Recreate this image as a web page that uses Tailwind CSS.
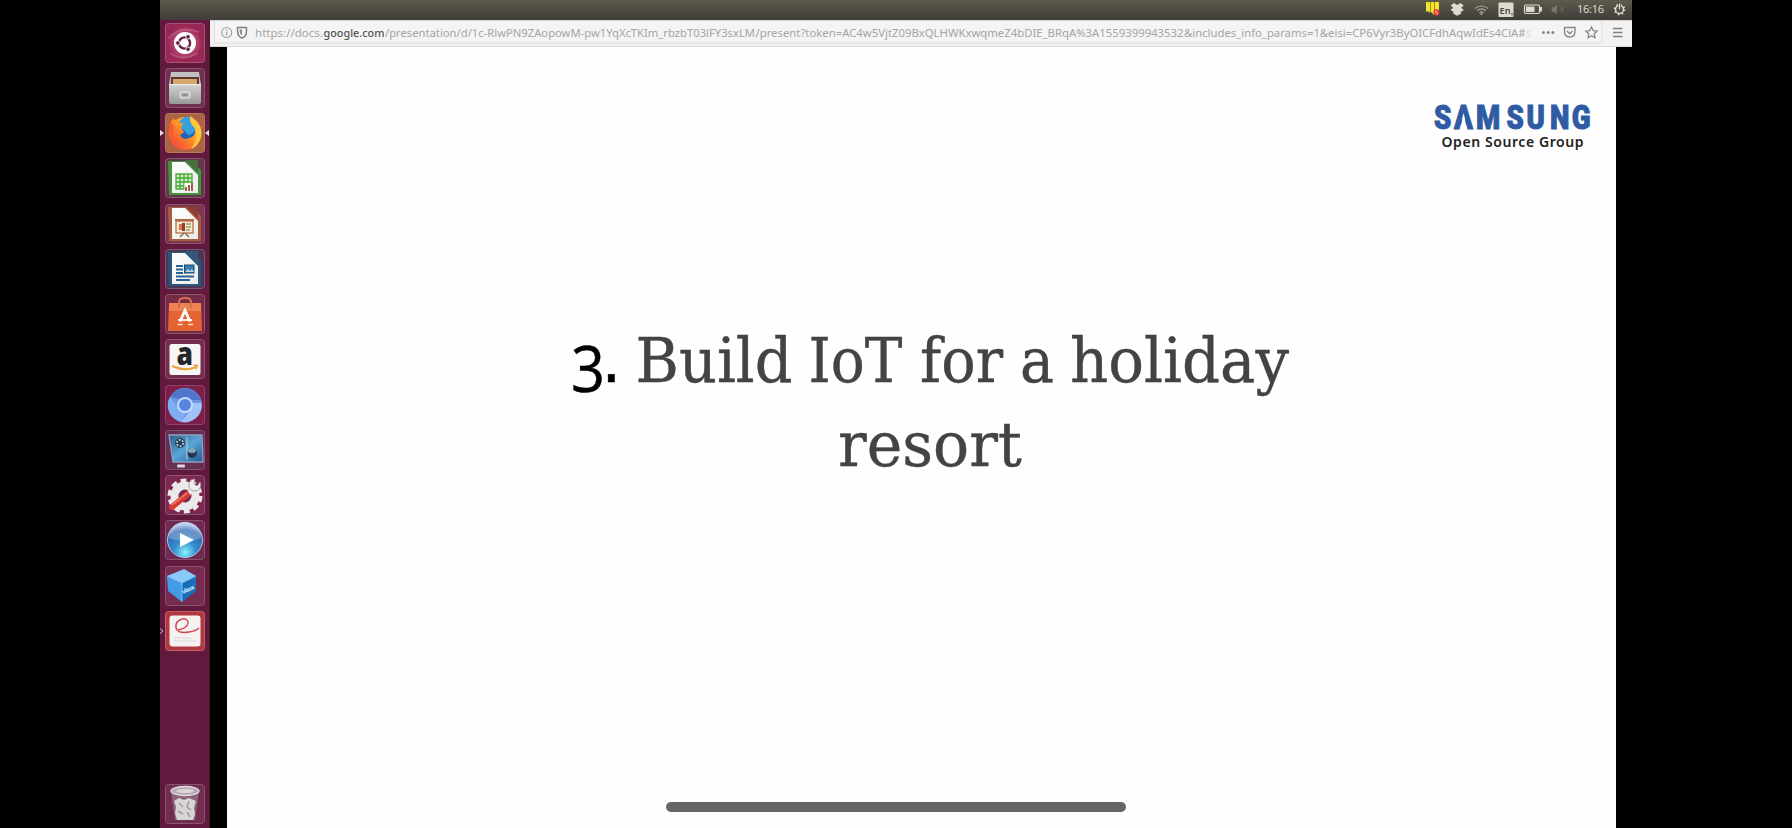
<!DOCTYPE html>
<html lang="en">
<head>
<meta charset="utf-8">
<title>Build IoT for a holiday resort</title>
<script src="https://cdn.jsdelivr.net/npm/@tailwindcss/browser@4"></script>
</head>
<body class="bg-black overflow-hidden font-['Noto_Sans',sans-serif]">
<svg class="absolute h-0 w-0">
  <defs>
    <linearGradient id="doc" x1="0" y1="0" x2="1" y2="1"><stop offset="0" stop-color="#fff"/><stop offset="1" stop-color="#e9ece8"/></linearGradient>
    <linearGradient id="drawer" x1="0" y1="0" x2="0" y2="1"><stop offset="0" stop-color="#d4d4d4"/><stop offset="1" stop-color="#989898"/></linearGradient>
    <linearGradient id="fox" x1="1" y1="0" x2="0" y2="1"><stop offset="0" stop-color="#ffe04a"/><stop offset=".45" stop-color="#ff9425"/><stop offset="1" stop-color="#f2383f"/></linearGradient>
    <radialGradient id="play" cx=".5" cy=".85" r=".8"><stop offset="0" stop-color="#8af4ff"/><stop offset=".4" stop-color="#318ccd"/><stop offset=".8" stop-color="#3469b4"/><stop offset="1" stop-color="#a7c4ea"/></radialGradient>
    <radialGradient id="swirl" cx=".5" cy=".5" r=".6"><stop offset="0" stop-color="#d27a9c"/><stop offset=".6" stop-color="#b0406c"/><stop offset="1" stop-color="#94244f"/></radialGradient>
    <linearGradient id="screen" x1="0" y1="0" x2="1" y2="1"><stop offset="0" stop-color="#285e8e"/><stop offset=".5" stop-color="#5ba6d6"/><stop offset="1" stop-color="#1d5792"/></linearGradient>
  </defs>
</svg>
<div class="mx-auto flex h-[828px] w-[1472px] flex-col">
  <!-- system panel -->
  <header class="flex h-5 shrink-0 items-center justify-end bg-linear-to-b from-[#5d5b4c] to-[#403d3a]">
    <svg width="212" height="20" viewBox="1420 0 212 20" class="text-[#dedbd2]">
      <path d="M1426 2h4v11l-2-2-2 1zM1431 2h3v13l-3-3zM1435 2h4v10h-4z" fill="#ede52b"/>
      <path d="M1430 2h1v10h-1zM1434 2h1v12h-1z" fill="#b9841d"/>
      <circle cx="1436.500" cy="12.500" r="2.400" fill="#f6d9d4" stroke="#e33d2d" stroke-width="1.500"/><path d="M1435 13.800l3-2.600" stroke="#e33d2d" stroke-width="1.200"/>
      <path d="M1454 3l3.200 2 3.200-2 3.400 2.500-2.600 2.200 2.600 2.300-3.400 2.300 1.200 1-4.400 2.400-4.400-2.400 1.200-1-3.400-2.300 2.600-2.300-2.600-2.200z" fill="currentColor"/>
      <path d="M1475 8.500q6.500-5 13 0M1477.200 10.700q4.300-3.500 8.600 0M1479.500 12.700q2-1.600 4 0" fill="none" stroke="#aaa79d" stroke-width="1.200"/><circle cx="1481.500" cy="14" r="1" fill="#bbb"/>
      <rect x="1498.500" y="2.500" width="15" height="14.500" rx="1" fill="#dedbd2"/>
      <text x="1499.500" y="13.500" font-size="9.500" font-weight="600" fill="#4b4944" textLength="11" lengthAdjust="spacingAndGlyphs">En</text><path d="M1512 13v2.500" stroke="#4b4944" stroke-width="1"/>
      <rect x="1524.500" y="5" width="15" height="8.500" rx="1.500" fill="none" stroke="currentColor" stroke-width="1.200"/><path d="M1526 6.500h8.500v5.500h-8.500zM1540 7h2v4.500h-2z" fill="currentColor"/>
      <path d="M1552 7.500h2l2.500-2.500v9l-2.500-2.500h-2zM1560 7l4 4.500M1564 7l-4 4.500" fill="#78756d" stroke="#78756d" stroke-width=".7"/>
      <text x="1577" y="13.300" font-size="11" fill="currentColor" textLength="27">16:16</text>
      <g fill="none" stroke="currentColor"><circle cx="1619.500" cy="9.500" r="4" stroke-width="1.500"/><circle cx="1619.500" cy="9.500" r="5.100" stroke-width="1.400" stroke-dasharray="1.600 2.400"/></g><path d="M1618.200 3.500h2.600v3.500h-2.600z" fill="#4d4b42"/><path d="M1619.500 3.500v6" stroke="currentColor" stroke-width="1.300"/>
    </svg>
  </header>
  <div class="flex min-h-0 flex-1">
    <!-- launcher -->
    <nav class="flex w-[50px] shrink-0 flex-col items-center gap-[5.250px] border-r border-[#4a1539] bg-[#611a3e] pt-[2.500px] pb-[4.500px]">
      <svg class="h-10 w-10 shrink-0" viewBox="0 0 40 40"><rect x=".5" y=".5" width="39" height="39" rx="3" fill="#9a2855" stroke="#ab5479"/><circle cx="20" cy="20" r="16" fill="url(#swirl)"/><path d="M3 16Q14 2 34 9M5 30q12 9 28 0" fill="none" stroke="#d490ac" stroke-opacity=".35" stroke-width="2"/><circle cx="20" cy="20" r="11" fill="#fff"/><circle cx="19.500" cy="20" r="5.600" fill="none" stroke="#642044" stroke-width="2.400"/><g fill="#642044" stroke="#fff" stroke-width=".9"><circle cx="12.800" cy="20" r="2.300"/><circle cx="23" cy="13.800" r="2.300"/><circle cx="23" cy="26.200" r="2.300"/></g></svg>
      <svg class="h-10 w-10 shrink-0" viewBox="0 0 40 40"><rect x=".5" y=".5" width="39" height="39" rx="3" fill="#713052" stroke="#88536f"/><path d="M6 4h28l2 13H4z" fill="#c1bfc0"/><path d="M6 9h28v8H6z" fill="#5c3a30"/><path d="M8 11h24v6H8z" fill="#d8a66e"/><path d="M4 16h32v18q0 2-2 2H6q-2 0-2-2z" fill="url(#drawer)"/><path d="M4 16.500h32" stroke="#f0f0f0"/><rect x="15" y="24" width="10" height="6" rx="1" fill="#b5b5b5" stroke="#eee"/><path d="M17.500 27h5" stroke="#777" stroke-width="1.400"/></svg>
      <span class="relative flex shrink-0">
        <svg class="h-10 w-10" viewBox="0 0 40 40"><rect x=".5" y=".5" width="39" height="39" rx="3" fill="#ac6343" stroke="#b97a5c"/><circle cx="20" cy="20.500" r="16.500" fill="url(#fox)"/><circle cx="20.500" cy="18" r="10" fill="#2466b5"/><path d="M15 8q4-6 10-4 2 6 6 10-2 8-8 8l-4-5-7-2z" fill="#38a0dc"/><path d="M4 17Q4 9 9 5l2 5 7 0-2 5 3 4-4 3q3 6 9 3 7-1 7-11 4 7-1 14Q20 38 9 29 4 24 4 17z" fill="url(#fox)"/><path d="M25 3q13 8 11 20-2 10-10 13 9-12 3-22-5-4-4-11z" fill="#ffc63c"/><path d="M3.500 16l2-7 4 5q-3 5-2 10-4-3-4-8z" fill="#f45d35"/></svg>
        <svg class="absolute -left-[4.500px] top-[17px]" width="4" height="6" viewBox="0 0 4 6"><path d="M0 0l4 3-4 3z" fill="#eadde4"/></svg>
        <svg class="absolute -right-[4.500px] top-[17px]" width="4" height="6" viewBox="0 0 4 6"><path d="M4 0L0 3l4 3z" fill="#eadde4"/></svg>
      </span>
      <svg class="h-10 w-10 shrink-0" viewBox="0 0 40 40"><rect x=".5" y=".5" width="39" height="39" rx="3" fill="#64364b" stroke="#855a70"/><path d="M3 3h24l9 9v25H4z" fill="#45933f"/><path d="M7 4h13l13 13v18H7z" fill="url(#doc)"/><path d="M20 2h13v13z" fill="#496e40"/><rect x="11" y="16" width="16" height="15" fill="#d5efca"/><path d="M11 16h16v15H11zM11 20h16M11 24h16M11 28h16M15 16v15M19 16v15M23 16v15" fill="none" stroke="#4cab3e" stroke-width="1.400"/><path d="M19.500 25h8.500v8h-8.500z" fill="#fff"/><path d="M20 29h2v4h-2zM23 27h2v6h-2zM26 25h2v8h-2z" fill="#a65b50"/></svg>
      <svg class="h-10 w-10 shrink-0" viewBox="0 0 40 40"><rect x=".5" y=".5" width="39" height="39" rx="3" fill="#7b3650" stroke="#8c506d"/><path d="M3 3h24l9 9v25H4z" fill="#a65c43"/><path d="M7 4h13l13 13v18H7z" fill="url(#doc)"/><path d="M20 2h13v13z" fill="#8b3c37"/><rect x="10" y="15" width="19" height="2" fill="#a9633d"/><rect x="11" y="17" width="17" height="12" fill="#fae7d4" stroke="#bb6f49" stroke-width="1.300"/><path d="M14 20h5v6h-5z" fill="#dc783c"/><path d="M17 19h3v8h-3z" fill="#933c37"/><path d="M21 20h5M21 23h5M21 26h4" stroke="#8eaa62" stroke-width="1.400"/><path d="M19 29l-4 4M20 29l4 4" stroke="#8b6b52" stroke-width="1.500"/></svg>
      <svg class="h-10 w-10 shrink-0" viewBox="0 0 40 40"><rect x=".5" y=".5" width="39" height="39" rx="3" fill="#503553" stroke="#715a7b"/><path d="M3 3h24l9 9v25H4z" fill="#285780"/><path d="M7 4h13l13 13v18H7z" fill="url(#doc)"/><path d="M20 2h13v13z" fill="#365779"/><path d="M11 17h7M11 20.500h7M11 24h7M11 27.500h18M11 31h14" stroke="#286396" stroke-width="1.800"/><rect x="19.500" y="16" width="9.500" height="8" fill="#337cac" stroke="#184b74"/><path d="M20 23l3-3 2 2 2-2 2 3z" fill="#bcd6dc"/></svg>
      <svg class="h-10 w-10 shrink-0" viewBox="0 0 40 40"><rect x=".5" y=".5" width="39" height="39" rx="3" fill="#742b46" stroke="#91576b"/><path d="M4 9h32l1 28H3z" fill="#e36432"/><path d="M4 9h32v8H4z" fill="#ef8252"/><path d="M14 14V8q0-4 6-4t6 4v6" fill="none" stroke="#d16f4e" stroke-width="2"/><path d="M15 27.500l5-11 5 11" fill="none" stroke="#fff" stroke-width="2.800"/><path d="M13 26h14" stroke="#fff" stroke-width="1.700"/><path d="M12.500 30.500h5M23 30.500h5" stroke="#ffd9c7" stroke-width="1.500"/></svg>
      <svg class="h-10 w-10 shrink-0 overflow-visible" viewBox="0 0 40 40"><rect x=".5" y=".5" width="39" height="39" rx="3" fill="#762c50" stroke="#8e5370"/><rect x="4.500" y="5" width="31" height="31" rx="2.500" fill="#f8f7f6"/><text x="11.500" y="25.500" font-family="Open Sans" font-weight="800" font-size="31" textLength="16.500" lengthAdjust="spacingAndGlyphs" fill="#242629">a</text><path d="M7 27q13 6 24 1" fill="none" stroke="#e9a13c" stroke-width="2"/><path d="M28.500 26l4 .5-2 4" fill="none" stroke="#e9a13c" stroke-width="1.500"/></svg>
      <svg class="h-10 w-10 shrink-0" viewBox="0 0 40 40"><rect x=".5" y=".5" width="39" height="39" rx="3" fill="#7d1f4b" stroke="#904167"/><circle cx="20" cy="20" r="17" fill="#6a96e4"/><path d="M5 12A17 17 0 0 1 36 15H20z" fill="#5176cd"/><path d="M5 12l9 12 7 4-5 9A17 17 0 0 1 5 12z" fill="#80aef2"/><path d="M27 18h9.500A17 17 0 0 1 16 37l8-10z" fill="#a1c4f8"/><circle cx="20" cy="20" r="8" fill="#c8dafb"/><circle cx="20" cy="20" r="6" fill="#5485df"/></svg>
      <svg class="h-10 w-10 shrink-0" viewBox="0 0 40 40"><rect x=".5" y=".5" width="39" height="39" rx="3" fill="#672f54" stroke="#7d5270"/><path d="M4 5h33l1 27H8z" fill="url(#screen)" stroke="#8fa2bd" stroke-width="1.300"/><circle cx="15" cy="13" r="5" fill="#243b55"/><circle cx="15" cy="13" r="3.200" fill="none" stroke="#bacbd8" stroke-width="1.800" stroke-dasharray="1.900 1.450"/><circle cx="27" cy="23" r="5" fill="#26394b"/><ellipse cx="27" cy="20.500" rx="4" ry="2.500" fill="#86a9c0"/><path d="M22 7v23" stroke="#a8d1ed" stroke-opacity=".5" stroke-width="2"/><rect x="12" y="34.500" width="8" height="3" rx="1" fill="#dadada"/></svg>
      <svg class="h-10 w-10 shrink-0" viewBox="0 0 40 40"><rect x=".5" y=".5" width="39" height="39" rx="3" fill="#7b2852" stroke="#905070"/><circle cx="20" cy="21" r="10.500" fill="none" stroke="#ebe9e9" stroke-width="8"/><circle cx="20" cy="21" r="15" fill="none" stroke="#ebe9e9" stroke-width="5" stroke-dasharray="5.600 3.824"/><path d="M7 32L24 18" stroke="#d63c34" stroke-width="6" stroke-linecap="round"/><path d="M7 30L22 18" stroke="#ee8376" stroke-width="1.200"/><path d="M24 18l4-3" stroke="#e8e8e8" stroke-width="5"/><path d="M35 7a6 6 0 1 1-5-3l-1 5 3 2z" fill="#eee" stroke="#a28c97" stroke-width=".8"/></svg>
      <svg class="h-10 w-10 shrink-0" viewBox="0 0 40 40"><rect x=".5" y=".5" width="39" height="39" rx="3" fill="#6f2b51" stroke="#8a5270"/><circle cx="20" cy="20" r="17.500" fill="url(#play)" stroke="#b1c8e1"/><path d="M3.500 18a16.500 16.500 0 0 1 33 0q-16 6-33 0z" fill="#fff" fill-opacity=".25"/><path d="M15 13l14 7-14 7z" fill="#fff"/></svg>
      <svg class="h-10 w-10 shrink-0" viewBox="0 0 40 40"><rect x=".5" y=".5" width="39" height="39" rx="3" fill="#762b50" stroke="#8d5170"/><path d="M2 10l17-7 12 7-14 7z" fill="#88cbfb"/><path d="M2 10l15 7v19L3 25z" fill="#439be8"/><path d="M17 17l14-7v15L17 36z" fill="#196ebb"/><path d="M2 10l15 7 14-7M17 17v19" fill="none" stroke="#9ad7ff" stroke-width=".7"/><text x="18" y="28" font-size="6" font-weight="700" fill="#d6efff" transform="rotate(-24 18 28)" textLength="13">vbox</text></svg>
      <span class="relative flex shrink-0">
        <svg class="h-10 w-10" viewBox="0 0 40 40"><rect x=".5" y=".5" width="39" height="39" rx="3" fill="#b03842" stroke="#c75d64"/><rect x="4.500" y="4.500" width="31" height="31" rx="3" fill="#f5f2f1"/><path d="M12 19q10-1 11-7 0-5-6-4-7 2-6 9 2 6 13 4 7-1 10-4" fill="none" stroke="#cf4a57" stroke-width="1.500"/><path d="M9 27h18M9 30h22" stroke="#dedadb" stroke-width="1.500" stroke-dasharray="3 1"/></svg>
        <svg class="absolute -left-[4.500px] top-[17px]" width="4" height="6" viewBox="0 0 4 6"><path d="M0 .5l3 2.500-3 2.500" fill="none" stroke="#cdb6c2"/></svg>
      </span>
      <svg class="mt-auto h-10 w-10 shrink-0" viewBox="0 0 40 40"><rect x=".5" y=".5" width="39" height="39" rx="3" fill="#712e50" stroke="#87536e"/><path d="M6 7h28l-4 29H10z" fill="#957083" fill-opacity=".8"/><ellipse cx="20" cy="7" rx="14" ry="4.500" fill="#b8aab2" stroke="#e3dde0" stroke-width="1.300"/><ellipse cx="20" cy="7" rx="9" ry="2" fill="#dcd4d9"/><path d="M9 17l5-3 5 2 5-2 7 3-2 7 1 6-2 6H12l-2-7 1-6z" fill="#d7d5d5"/><path d="M14 19l4 4M24 17l-2 6 4 3M13 27l5 3M22 28l3 5" fill="none" stroke="#a19b9f" stroke-width="1.500"/></svg>
    </nav>
    <main class="flex min-w-0 flex-1 flex-col">
      <!-- address bar -->
      <div class="h-[26.500px] shrink-0 border-b border-[#dddbda] bg-[#f3f2f1]">
        <svg class="block" width="1422" height="26" viewBox="210 20 1422 26">
          <path d="M210 20.500h1422" stroke="#d7d6d4"/>
          <path d="M214.500 21v21q0 1 1 1H1601q1 0 1-1V21" fill="#f5f4f4" stroke="#dddcdb"/>
          <circle cx="226.700" cy="32.500" r="5" fill="none" stroke="#a0a0a0" stroke-width="1.100"/><path d="M226.700 31.500v4M226.700 29.300v1.300" stroke="#a0a0a0" stroke-width="1.300"/>
          <path d="M242 27.500l4.500 0 0 3.500q0 5-4.500 7.200-4.500-2.200-4.500-7.200v-3.500z" fill="none" stroke="#7d7d7d" stroke-width="1.400"/><path d="M242 29.500v6q-2.500-1.500-2.500-6z" fill="#8c8c8c"/>
          <g font-size="11.500" fill="#a4a4a4">
            <text x="255" y="36.600" textLength="68" lengthAdjust="spacingAndGlyphs">https://docs.</text>
            <text x="323.500" y="36.600" fill="#555" font-weight="500" textLength="61" lengthAdjust="spacingAndGlyphs">google.com</text>
            <text x="385" y="36.600" textLength="370" lengthAdjust="spacingAndGlyphs">/presentation/d/1c-RlwPN9ZAopowM-pw1YqXcTKIm_rbzbT03lFY3sxLM</text>
            <text x="755.500" y="36.600" textLength="428" lengthAdjust="spacingAndGlyphs">/present?token=AC4w5VjtZ09BxQLHWKxwqmeZ4bDIE_BRqA%3A1559399943532</text>
            <text x="1184" y="36.600" textLength="347" lengthAdjust="spacingAndGlyphs">&amp;includes_info_params=1&amp;eisi=CP6Vyr3ByOICFdhAqwIdEs4ClA#<tspan fill="#ddd">s</tspan></text>
          </g>
          <g fill="#888"><circle cx="1543.500" cy="32.500" r="1.500"/><circle cx="1548.200" cy="32.500" r="1.500"/><circle cx="1552.900" cy="32.500" r="1.500"/></g>
          <path d="M1564.500 27.500h10.500v4q0 5.500-5.250 5.500t-5.250-5.500zM1567 31l2.750 2.700 2.750-2.700" fill="none" stroke="#888" stroke-width="1.400"/>
          <path d="M1591.500 27l1.700 3.600 3.900.5-2.900 2.700.8 3.900-3.500-2-3.500 2 .8-3.900-2.900-2.700 3.900-.5z" fill="none" stroke="#888" stroke-width="1.300"/>
          <path d="M1613 28.500h9.500M1613 32.500h9.500M1613 36.500h9.500" stroke="#808080" stroke-width="1.600"/>
        </svg>
      </div>
      <!-- slide -->
      <section class="relative ml-[16.500px] mr-4 flex-1 bg-[#fefefe]">
        <svg class="block" width="1389" height="781" viewBox="227 47 1389 781">
          <text transform="scale(.85 1)" x="1687 1710.500 1736.500 1772.300 1796 1823.500 1849" y="129.500" font-family="Roboto" font-weight="900" font-size="32.500" fill="#2f5ba4" stroke="#2f5ba4" stroke-width="1">SAMSUNG</text>
          <path d="M1463.600 113l3.700 18h-7.400z" fill="#fefefe"/>
          <text x="1441.500" y="147" font-family="Noto Sans" font-weight="600" font-size="14" fill="#222" textLength="142">Open Source Group</text>
          <text x="571" y="391.500" font-family="Open Sans" font-size="64" textLength="34" lengthAdjust="spacingAndGlyphs" stroke="#000" stroke-width=".5">3</text>
          <text x="601.500" y="382" font-family="DejaVu Sans" font-size="62" stroke="#000" stroke-width=".5">.</text>
          <g font-family="DejaVu Serif" font-size="61" fill="#434343" stroke="#434343" stroke-width=".4">
            <text x="635.500" y="382" textLength="157" lengthAdjust="spacingAndGlyphs">Build</text>
            <text x="808.500" y="382" textLength="94" lengthAdjust="spacingAndGlyphs">IoT</text>
            <text x="920" y="382" textLength="83" lengthAdjust="spacingAndGlyphs">for</text>
            <text x="1020" y="382" textLength="34" lengthAdjust="spacingAndGlyphs">a</text>
            <text x="1070" y="382" textLength="219" lengthAdjust="spacingAndGlyphs">holiday</text>
            <text x="838" y="465.500" textLength="184" lengthAdjust="spacingAndGlyphs">resort</text>
          </g>
        </svg>
        <div class="absolute bottom-4 left-[439px] h-[10px] w-[460px] rounded-full bg-[#666]"></div>
      </section>
    </main>
  </div>
</div>
</body>
</html>
